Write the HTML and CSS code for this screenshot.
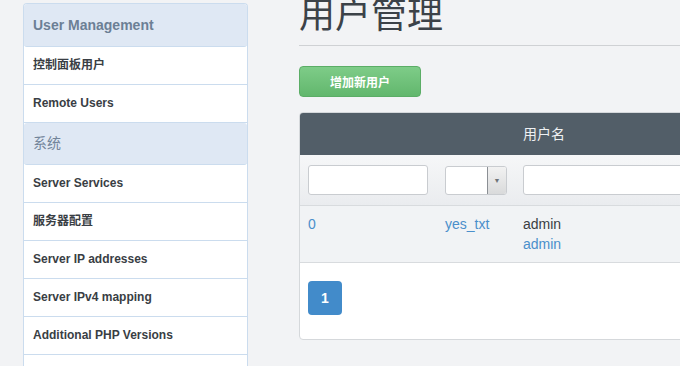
FILE: index.html
```html
<!DOCTYPE html>
<html lang="zh">

<head>
    <meta charset="UTF-8">
    <title>用户管理</title>
    <link rel="stylesheet" href="styles.css">
</head>

<body>
    <div class="page">
        <!-- Боковое меню -->
        <aside class="side">
            <div class="side-head">User Management</div>
            <a href="#" class="side-item">控制面板用户</a>
            <a href="#" class="side-item">Remote Users</a>
            <div class="side-head side-head-cn">系统</div>
            <a href="#" class="side-item">Server Services</a>
            <a href="#" class="side-item">服务器配置</a>
            <a href="#" class="side-item">Server IP addresses</a>
            <a href="#" class="side-item">Server IPv4 mapping</a>
            <a href="#" class="side-item">Additional PHP Versions</a>
            <a href="#" class="side-item">&nbsp;</a>
        </aside>

        <!-- Контент -->
        <main class="main">
            <div class="page-header">
                <h1>用户管理</h1>
            </div>

            <button class="btn-add">增加新用户</button>

            <div class="panel">
                <div class="grid-row head-row">
                    <div class="cell"></div>
                    <div class="cell"></div>
                    <div class="cell">用户名</div>
                </div>
                <div class="grid-row filter-row">
                    <div class="cell"><input type="text" class="field field-id"></div>
                    <div class="cell">
                        <div class="select">
                            <span class="select-value"></span>
                            <span class="select-arrow">▼</span>
                        </div>
                    </div>
                    <div class="cell"><input type="text" class="field field-name"></div>
                </div>
                <div class="grid-row data-row">
                    <div class="cell"><a href="#">0</a></div>
                    <div class="cell"><a href="#">yes_txt</a></div>
                    <div class="cell">
                        admin<br>
                        <a href="#">admin</a>
                    </div>
                </div>
                <div class="pager">
                    <a href="#" class="page-btn">1</a>
                </div>
            </div>
        </main>
    </div>
</body>

</html>
```

FILE: styles.css
```css
/* Общие стили */
html,
body {
    overflow: hidden;
}

body {
    margin: 0;
    background-color: #f2f3f5;
    font-family: 'Liberation Sans', 'Noto Sans CJK SC', sans-serif;
    font-size: 14px;
    color: #393e44;
}

a {
    color: #4a8fcb;
    text-decoration: none;
}

.page {
    display: flex;
    align-items: flex-start;
    padding-left: 23px;
}

/* Боковое меню */
.side {
    box-sizing: border-box;
    flex: 0 0 225px;
    margin-top: 3px;
    background-color: #fff;
    border: 1px solid #cbdcee;
    border-bottom: none;
    border-radius: 4px 4px 0 0;
}

.side-head {
    height: 41px;
    line-height: 41px;
    padding-left: 9px;
    background-color: #dfe8f4;
    border-radius: 3px;
    border-bottom: 1px solid #cbdcee;
    color: #6c7f95;
    font-size: 14px;
    font-weight: bold;
}

.side-head:first-child {
    height: 42px;
    line-height: 42px;
}

.side-head-cn {
    font-weight: normal;
    color: #72849a;
}

.side-item {
    display: block;
    height: 37px;
    line-height: 37px;
    padding-left: 9px;
    border-bottom: 1px solid #cbdcee;
    color: #393e44;
    font-size: 12px;
    font-weight: bold;
}

/* Основная часть */
.main {
    flex: 0 0 560px;
    margin-left: 51px;
}

.page-header {
    display: flow-root;
    height: 45px;
    border-bottom: 1px solid #cfd1d4;
}

.page-header h1 {
    margin: 0;
    margin-top: -8px;
    font-size: 36px;
    line-height: 48px;
    font-weight: normal;
    color: #3c4248;
}

.btn-add {
    display: block;
    width: 122px;
    height: 31px;
    margin-top: 20px;
    padding: 0;
    background: linear-gradient(#7ecc88, #62b76d);
    border: 1px solid #5bad66;
    border-radius: 4px;
    color: #fff;
    font-family: inherit;
    font-size: 12px;
    font-weight: bold;
}

/* Таблица */
.panel {
    margin-top: 15px;
    background-color: #fff;
    border: 1px solid #d5d8db;
    border-radius: 4px;
}

.grid-row {
    display: grid;
    grid-template-columns: 137px 78px 1fr;
}

.cell {
    padding-left: 8px;
}

.head-row {
    height: 42px;
    line-height: 42px;
    background-color: #525e68;
    border-radius: 3px 3px 0 0;
    color: #eef0f2;
}

.filter-row {
    height: 50px;
    align-items: center;
    background: linear-gradient(#f6f7f8, #eaecef);
    border-bottom: 1px solid #d8dbde;
}

.field {
    display: block;
    box-sizing: border-box;
    height: 30px;
    margin: 0;
    background-color: #fff;
    border: 1px solid #c9ccd0;
    border-radius: 3px;
}

.field-id {
    width: 120px;
}

.field-name {
    width: 100%;
}

.select {
    display: flex;
    box-sizing: border-box;
    width: 62px;
    height: 29px;
    background-color: #fff;
    border: 1px solid #c9ccd0;
    border-radius: 3px;
    overflow: hidden;
}

.select-value {
    flex: 1;
}

.select-arrow {
    width: 18px;
    border-left: 1px solid #8b8f94;
    background: linear-gradient(#f2f2f2, #d9dadb);
    color: #6f7378;
    font-size: 7px;
    line-height: 27px;
    text-align: center;
}

.data-row {
    padding: 8px 0;
    line-height: 20px;
    background-color: #f1f3f5;
    border-bottom: 1px solid #d8dbde;
}

/* Пагинация */
.pager {
    padding: 18px 8px 24px;
}

.page-btn {
    display: block;
    width: 34px;
    height: 34px;
    line-height: 34px;
    background-color: #428bca;
    border-radius: 4px;
    color: #fff;
    font-weight: bold;
    text-align: center;
}
```
